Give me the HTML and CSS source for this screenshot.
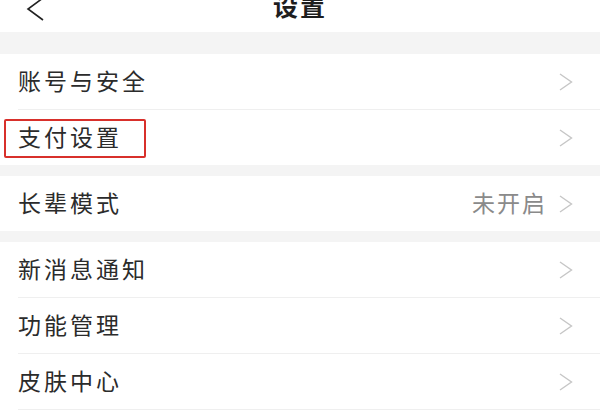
FILE: index.html
```html
<!DOCTYPE html>
<html lang="zh-CN">
<head>
<meta charset="utf-8">
<title>设置</title>
<link rel="stylesheet" href="styles.css">
</head>
<body>
<div class="page">
  <header class="header">
    <div class="header-row">
      <svg class="back" width="20" height="24" viewBox="0 0 20 24"><polyline points="17,1 2,12 17,23" fill="none" stroke="#222" stroke-width="1.6" stroke-linejoin="miter"/></svg>
      <div class="title">设置</div>
      <div class="spacer"></div>
    </div>
  </header>
  <div class="band band-top"></div>
  <section class="group">
    <div class="row"><span class="label">账号与安全</span><span class="chev"><svg width="14" height="18" viewBox="0 0 14 18"><polyline points="1,1 12.5,9 1,17" fill="none" stroke="#c6c6c6" stroke-width="1.4"/></svg></span></div>
    <div class="row last highlight"><span class="label">支付设置</span><span class="chev"><svg width="14" height="18" viewBox="0 0 14 18"><polyline points="1,1 12.5,9 1,17" fill="none" stroke="#c6c6c6" stroke-width="1.4"/></svg></span><span class="redbox"></span></div>
  </section>
  <div class="band"></div>
  <section class="group">
    <div class="row last"><span class="label">长辈模式</span><span class="value">未开启</span><span class="chev"><svg width="14" height="18" viewBox="0 0 14 18"><polyline points="1,1 12.5,9 1,17" fill="none" stroke="#c6c6c6" stroke-width="1.4"/></svg></span></div>
  </section>
  <div class="band"></div>
  <section class="group">
    <div class="row"><span class="label">新消息通知</span><span class="chev"><svg width="14" height="18" viewBox="0 0 14 18"><polyline points="1,1 12.5,9 1,17" fill="none" stroke="#c6c6c6" stroke-width="1.4"/></svg></span></div>
    <div class="row"><span class="label">功能管理</span><span class="chev"><svg width="14" height="18" viewBox="0 0 14 18"><polyline points="1,1 12.5,9 1,17" fill="none" stroke="#c6c6c6" stroke-width="1.4"/></svg></span></div>
    <div class="row"><span class="label">皮肤中心</span><span class="chev"><svg width="14" height="18" viewBox="0 0 14 18"><polyline points="1,1 12.5,9 1,17" fill="none" stroke="#c6c6c6" stroke-width="1.4"/></svg></span></div>
  </section>
</div>
</body>
</html>
```
FILE: styles.css
```css
* { box-sizing: border-box; }
html, body {
  margin: 0;
  padding: 0;
  background: #ffffff;
}
body {
  width: 600px;
  height: 420px;
  overflow: hidden;
  font-family: "Noto Sans CJK SC", "Noto Sans", sans-serif;
  color: #2b2b2b;
}
.page {
  display: flex;
  flex-direction: column;
}
.header {
  height: 32px;
  background: #fff;
  overflow: hidden;
}
.header-row {
  display: flex;
  align-items: center;
  height: 34px;
  margin-top: -12px;
  padding: 0 26px;
}
.back {
  width: 20px;
  height: 24px;
  margin-top: 8px;
  flex: none;
}
.title {
  flex: 1;
  text-align: center;
  font-size: 25px;
  font-weight: 700;
  letter-spacing: 2px;
  color: #1e1e1e;
  line-height: 34px;
  margin-right: 20px;
}
.spacer { width: 0; }
.band {
  height: 11px;
  background: #f4f4f4;
}
.band-top {
  height: 22px;
}
.group {
  background: #fff;
}
.row {
  position: relative;
  display: flex;
  align-items: center;
  height: 56px;
  margin-left: 18px;
  padding: 0 27px 0 0;
  border-bottom: 1px solid #efefef;
}
.row.last {
  height: 55px;
  border-bottom: none;
}
.label {
  flex: 1;
  font-size: 23px;
  letter-spacing: 3px;
  line-height: 28px;
  margin-bottom: 3px;
  color: #2b2b2b;
}
.value {
  font-size: 23px;
  letter-spacing: 2px;
  color: #8a8a8a;
  line-height: 28px;
  margin-bottom: 3px;
  margin-right: 12px;
}
.chev {
  display: flex;
  width: 14px;
  height: 18px;
}
.redbox {
  position: absolute;
  left: -14px;
  top: 9px;
  width: 142px;
  height: 39px;
  border: 2px solid #d8302b;
  border-radius: 2px;
  pointer-events: none;
}
```
